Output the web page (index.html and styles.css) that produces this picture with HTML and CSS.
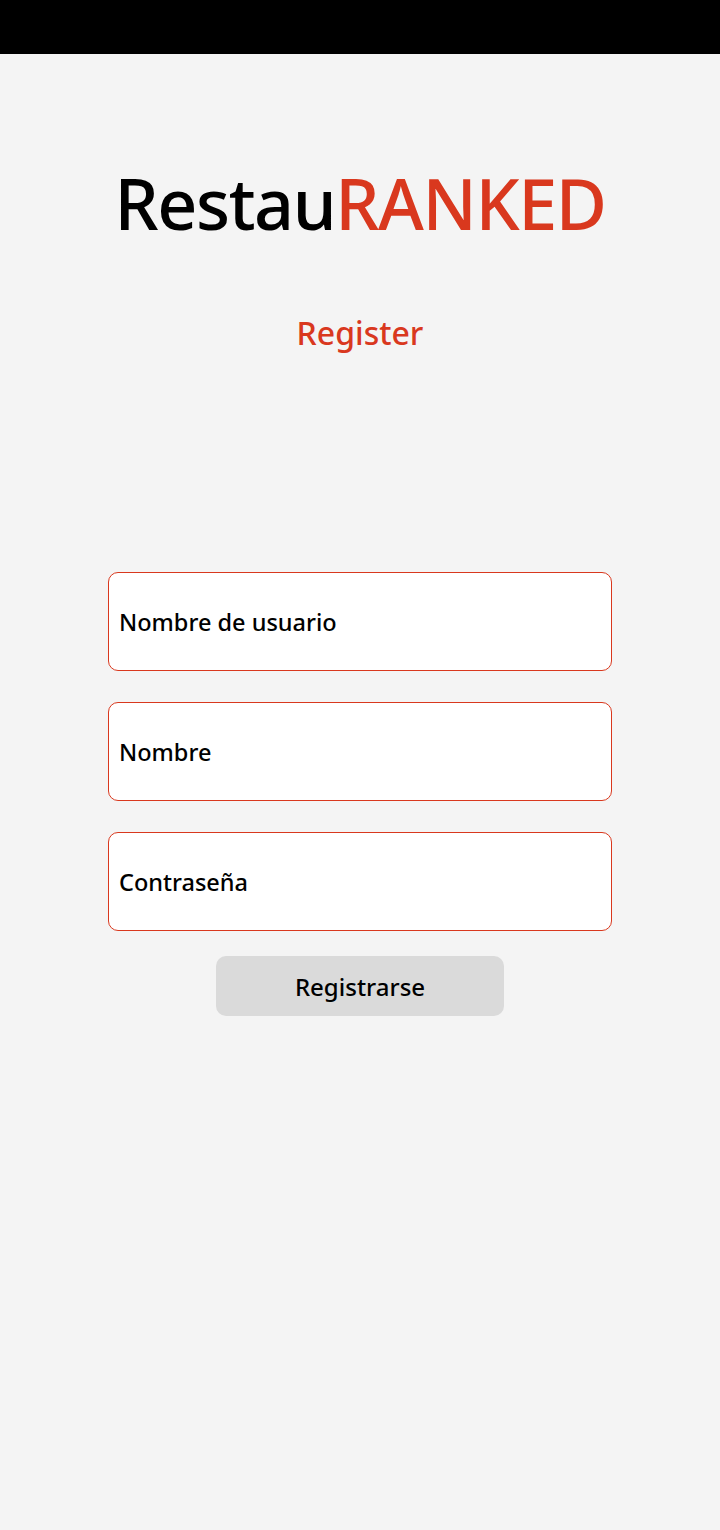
FILE: index.html
```html
<!DOCTYPE html>
<html lang="es">
<head>
<meta charset="utf-8">
<title>RestauRANKED - Register</title>
<link rel="stylesheet" href="styles.css">
</head>
<body>
<div class="statusbar"></div>
<main class="screen">
  <h1 class="logo">Restau<span class="accent">RANKED</span></h1>
  <h2 class="subtitle">Register</h2>
  <form class="form">
    <div class="field"><span class="placeholder">Nombre de usuario</span></div>
    <div class="field"><span class="placeholder">Nombre</span></div>
    <div class="field"><span class="placeholder">Contraseña</span></div>
    <button type="button" class="btn">Registrarse</button>
  </form>
</main>
</body>
</html>
```
FILE: styles.css
```css
* { box-sizing: border-box; }
html, body { margin: 0; padding: 0; }
body {
  background: #f4f4f4;
  font-family: "Noto Sans", "Open Sans", sans-serif;
  color: #000;
  width: 720px;
  height: 1530px;
  overflow: hidden;
}
.statusbar { height: 54px; background: #000; }
.screen {
  display: flex;
  flex-direction: column;
  align-items: center;
}
.logo {
  margin: 104px 0 0;
  font-size: 70px;
  font-weight: 500;
  line-height: 90px;
  letter-spacing: -1.4px;
}
.accent { color: #d9381e; }
.subtitle {
  margin: 62px 0 0;
  font-size: 32px;
  font-weight: 500;
  line-height: 46px;
  color: #d9381e;
}
.form {
  margin-top: 216px;
  display: flex;
  flex-direction: column;
  align-items: center;
  gap: 31px;
}
.field {
  width: 504px;
  height: 99px;
  background: #fff;
  border: 1px solid #d9381e;
  border-radius: 10px;
  display: flex;
  align-items: center;
  padding-left: 10px;
  font-size: 23.5px;
  font-weight: 500;
}
.btn {
  margin-top: -6px;
  width: 288px;
  height: 60px;
  background: #dadada;
  border: none;
  border-radius: 10px;
  font-family: inherit;
  font-size: 24px;
  font-weight: 500;
  color: #000;
}
```
